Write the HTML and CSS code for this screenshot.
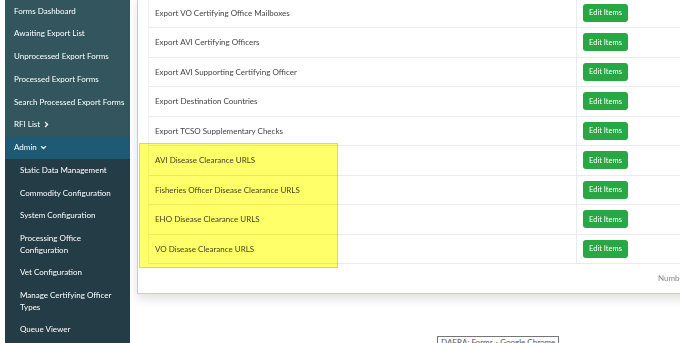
FILE: index.html
```html
<!DOCTYPE html>
<html lang="en">
<head>
    <meta charset="UTF-8">
    <meta name="viewport" content="width=device-width, initial-scale=1.0">
    <title>DAERA: Forms</title>
    <link rel="stylesheet" href="styles.css">
</head>
<body>
    <div class="page">
        <nav class="sidebar">
            <a class="nav-item" href="#">Forms Dashboard</a>
            <a class="nav-item" href="#">Awaiting Export List</a>
            <a class="nav-item" href="#">Unprocessed Export Forms</a>
            <a class="nav-item" href="#">Processed Export Forms</a>
            <a class="nav-item" href="#">Search Processed Export Forms</a>
            <a class="nav-item" href="#">RFI List
                <svg class="chev" viewBox="0 0 10 10" width="7" height="7"><path d="M3 1.5 L6.5 5 L3 8.5" fill="none" stroke="#fff" stroke-width="1.8"/></svg>
            </a>
            <a class="nav-item nav-open" href="#">Admin
                <svg class="chev" viewBox="0 0 10 10" width="7" height="7"><path d="M1.5 3 L5 6.5 L8.5 3" fill="none" stroke="#fff" stroke-width="1.8"/></svg>
            </a>
            <div class="nav-sub">
                <a class="sub-item" href="#">Static Data Management</a>
                <a class="sub-item" href="#">Commodity Configuration</a>
                <a class="sub-item" href="#">System Configuration</a>
                <a class="sub-item" href="#">Processing Office Configuration</a>
                <a class="sub-item" href="#">Vet Configuration</a>
                <a class="sub-item" href="#">Manage Certifying Officer Types</a>
                <a class="sub-item" href="#">Queue Viewer</a>
            </div>
        </nav>

        <main class="content">
            <div class="card">
                <table class="items">
                    <tr><td>Export VO Certifying Office Mailboxes</td><td class="act"><button class="btn-edit">Edit Items</button></td></tr>
                    <tr><td>Export AVI Certifying Officers</td><td class="act"><button class="btn-edit">Edit Items</button></td></tr>
                    <tr><td>Export AVI Supporting Certifying Officer</td><td class="act"><button class="btn-edit">Edit Items</button></td></tr>
                    <tr><td>Export Destination Countries</td><td class="act"><button class="btn-edit">Edit Items</button></td></tr>
                    <tr><td>Export TCSO Supplementary Checks</td><td class="act"><button class="btn-edit">Edit Items</button></td></tr>
                    <tr><td>AVI Disease Clearance URLS</td><td class="act"><button class="btn-edit">Edit Items</button></td></tr>
                    <tr><td>Fisheries Officer Disease Clearance URLS</td><td class="act"><button class="btn-edit">Edit Items</button></td></tr>
                    <tr><td>EHO Disease Clearance URLS</td><td class="act"><button class="btn-edit">Edit Items</button></td></tr>
                    <tr><td>VO Disease Clearance URLS</td><td class="act"><button class="btn-edit">Edit Items</button></td></tr>
                </table>
                <div class="card-footer">Number of items per page: 10</div>
            </div>
            <!-- marcação amarela do print -->
            <div class="highlight"></div>
        </main>

        <div class="tooltip">DAERA: Forms - Google Chrome</div>
    </div>
</body>
</html>
```

FILE: styles.css
```css
body {
    margin: 0;
    background: #fff;
    font-family: 'Lato', 'Liberation Sans', sans-serif;
    font-size: 8px;
}

.page {
    position: relative;
    display: flex;
    width: 680px;
    height: 343px;
    padding-left: 5px;
    box-sizing: border-box;
    overflow: hidden;
}

.sidebar {
    width: 125px;
    flex-shrink: 0;
    display: flex;
    flex-direction: column;
    background-color: #33555e;
}

.nav-item,
.sub-item {
    display: block;
    color: #fff;
    text-decoration: none;
    line-height: 11.5px;
    padding: 5.625px 0 5.625px 9px;
}

.nav-item {
    white-space: nowrap;
}

.chev {
    vertical-align: -1px;
    margin-left: 1px;
}

.nav-open {
    background-color: #1d5a76;
}

.nav-sub {
    flex: 1;
    background-color: #243c45;
}

.sub-item {
    padding-left: 15px;
    max-width: 100px;
}

.content {
    position: relative;
    flex: 1;
}

.card {
    width: 600px;
    margin: -3px 0 0 7px;
    background: #fff;
    border: 1px solid #b3d4e4;
    box-shadow: 0 5px 10px rgba(0, 0, 0, 0.12);
}

.items {
    border-collapse: collapse;
    margin-left: 10px;
    width: 589px;
    border-left: 1px solid #eef0f2;
}

.items tr {
    height: 29.5px;
}

.items td {
    padding: 0 6px;
    border-bottom: 1px solid #e9ecef;
    color: #444;
    vertical-align: middle;
}

.items td:first-child {
    width: 415px;
}

.items td.act {
    border-left: 1px solid #e9ecef;
}

.btn-edit {
    width: 45px;
    height: 18px;
    padding: 0;
    border: 0;
    border-radius: 3px;
    background-color: #28a745;
    color: #fff;
    font-family: inherit;
    font-size: 7.5px;
}

.card-footer {
    height: 29px;
    line-height: 29px;
    padding-left: 520px;
    color: #888;
    white-space: nowrap;
}

.highlight {
    position: absolute;
    left: 9px;
    top: 143px;
    width: 197px;
    height: 123px;
    background: #ffff6a;
    border: 1px solid #e8dc3a;
    mix-blend-mode: multiply;
}

.tooltip {
    position: absolute;
    left: 437px;
    top: 336px;
    padding: 0 3px;
    border: 1px solid #767676;
    background: #fff;
    color: #555;
    font-size: 8px;
    line-height: 10px;
    white-space: nowrap;
}
```
